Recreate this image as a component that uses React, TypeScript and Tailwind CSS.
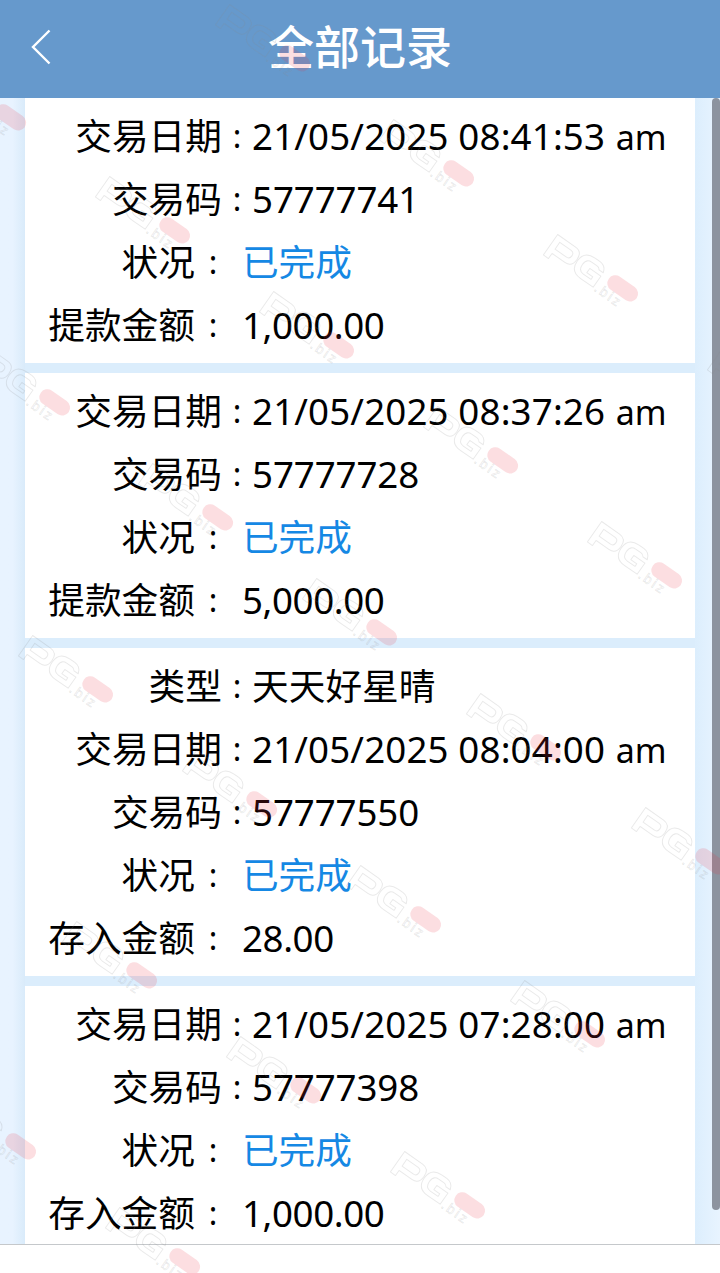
import React from "react";

type Entry = { label: string; value: string; suffix?: string; wide?: boolean; link?: boolean; spacing: string };

const date = (value: string): Entry => ({ label: "交易日期", value, suffix: "am", spacing: "tracking-[0.15px]" });
const code = (value: string): Entry => ({ label: "交易码", value, spacing: "tracking-[-0.1px]" });
const status: Entry = { label: "状况", value: "已完成", wide: true, link: true, spacing: "tracking-[-0.1px]" };
const amount = (label: string, value: string): Entry => ({ label, value, wide: true, spacing: "tracking-[-0.4px]" });

const records: Entry[][] = [
  [date("21/05/2025 08:41:53"), code("57777741"), status, amount("提款金额", "1,000.00")],
  [date("21/05/2025 08:37:26"), code("57777728"), status, amount("提款金额", "5,000.00")],
  [
    { label: "类型", value: "天天好星晴", spacing: "tracking-[0px]" },
    date("21/05/2025 08:04:00"),
    code("57777550"),
    status,
    amount("存入金额", "28.00"),
  ],
  [date("21/05/2025 07:28:00"), code("57777398"), status, amount("存入金额", "1,000.00")],
];

const marks = [
  [295, 58], [459, 173], [623, 288], [787, 403],
  [11, 117], [175, 230], [339, 345], [503, 460], [667, 575],
  [55, 402], [218, 517], [382, 632], [546, 747], [711, 861],
  [98, 689], [262, 804], [426, 919], [590, 1034],
  [142, 975], [306, 1090], [470, 1205],
  [21, 1146], [185, 1261],
];

function Row({ entry }: { entry: Entry }) {
  return (
    <div className="flex h-[63px] items-center whitespace-nowrap">
      <span className={entry.wide ? "w-[170px] text-right" : "w-[197px] text-right"}>{entry.label}</span>
      <span className={entry.wide ? "w-[47px] pr-[11px] text-center text-[32px]" : "w-[30px] text-center text-[32px]"}>:</span>
      <span className={`${entry.spacing} ${entry.link ? "text-[#1588e4]" : ""}`}>
        {entry.value}
        {entry.suffix && <span className="ml-[2px] text-[34px] tracking-[-0.2px]"> {entry.suffix}</span>}
      </span>
    </div>
  );
}

function Watermarks() {
  return (
    <svg className="pointer-events-none absolute inset-0" width="720" height="1273" viewBox="0 0 720 1273">
      {marks.map(([x, y]) => (
        <g key={`${x}-${y}`} transform={`translate(${x} ${y}) rotate(35)`}>
          <g transform="translate(-1 3) scale(1.04)" fill="none" stroke="#8c8c8c" strokeOpacity="0.19" strokeWidth="0.9" strokeLinejoin="round">
            <path d="M-80 15V-9h21q8 0 8 9t-8 9h-15v6zM-74-4v8h13q4 0 4-4t-4-4z" />
            <path d="M-23-4q-2-7-9-7h-6q-12 0-12 12t12 12h15V0h-13v5h7v3h-9q-6 0-6-7t6-7h6q3 0 4 2z" />
          </g>
          <rect x="-17" y="-7.500" width="34" height="16" rx="8" fill="#ee3444" fillOpacity="0.16" />
          <text x="-23" y="19" fontSize="14" fontFamily="Liberation Sans, sans-serif" letterSpacing="2.2" fill="none" stroke="#8c8c8c" strokeOpacity="0.22" strokeWidth="0.6">.biz</text>
        </g>
      ))}
    </svg>
  );
}

export default function App() {
  return (
    <div className="relative flex h-[1273px] w-[720px] flex-col overflow-hidden bg-white font-['Noto_Sans','Noto_Sans_CJK_SC',sans-serif] text-black">
      <header className="grid h-[98px] shrink-0 grid-cols-[100px_1fr_100px] items-center bg-[#6699cc] text-white">
        <svg className="ml-[30px]" width="22" height="40" viewBox="0 0 22 40" fill="none" stroke="currentColor" strokeWidth="2.4">
          <path d="M19.500 1.500 3 18l16.500 16.500" />
        </svg>
        <h1 className="-mt-[7px] text-center text-[46px] leading-none font-medium">全部记录</h1>
      </header>
      <div className="flex h-[1146px] shrink-0 overflow-hidden">
        <div className="w-[25px] bg-linear-to-r from-[#e8f3ff] from-50% to-[#d9ebfa]" />
        <main className="flex w-[670px] flex-col gap-[10px] overflow-hidden bg-[#dbedfc] text-[36.700px] leading-none">
          {records.map((entries, index) => (
            <section key={index} className="shrink-0 bg-white pt-[6.500px] pb-[6.500px]">
              {entries.map((entry) => (
                <Row key={entry.label} entry={entry} />
              ))}
            </section>
          ))}
        </main>
        <div className="flex w-[25px] justify-end bg-linear-to-r from-[#dceefd] to-[#e8f4ff]">
          <div className="h-[1112px] w-2 rounded-full bg-[#8c939f]" />
        </div>
      </div>
      <footer className="flex-1 border-t border-[#c5c8cb] bg-white" />
      <Watermarks />
    </div>
  );
}
